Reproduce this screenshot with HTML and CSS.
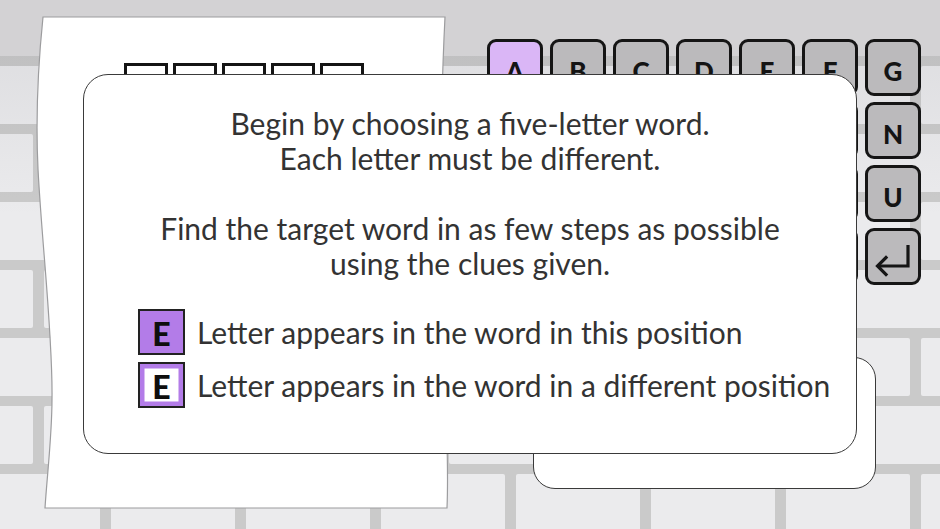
FILE: index.html
```html
<!DOCTYPE html>
<html>
<head>
<meta charset="utf-8">
<link rel="stylesheet" href="styles.css">
</head>
<body>
<div class="scene">
  <div class="bg">
    <div class="band"></div>
    <div class="row row-b"><i></i><i></i><i></i><i></i><i></i><i></i><i></i><i></i></div>
    <div class="row row-a"><i></i><i></i><i></i><i></i><i></i><i></i><i></i><i></i></div>
    <div class="row row-b"><i></i><i></i><i></i><i></i><i></i><i></i><i></i><i></i></div>
    <div class="row row-a"><i></i><i></i><i></i><i></i><i></i><i></i><i></i><i></i></div>
    <div class="row row-b"><i></i><i></i><i></i><i></i><i></i><i></i><i></i><i></i></div>
    <div class="row row-a"><i></i><i></i><i></i><i></i><i></i><i></i><i></i><i></i></div>
    <div class="row row-b"><i></i><i></i><i></i><i></i><i></i><i></i><i></i><i></i></div>
  </div>
  <div class="shade"></div>

  <div class="paper">
    <svg class="paper-shape" width="420" height="500" viewBox="0 0 420 500">
      <path d="M7,1 L409,1 C406,60 404,150 405,250 C406,350 414,420 411,492 L9,492 C11,460 16,420 16,383 C17,320 6,230 2,153 C-1,90 3,40 7,1 Z" fill="#ffffff" stroke="#9c9c9e" stroke-width="1.2"/>
    </svg>
    <div class="slots">
      <div class="slot"></div><div class="slot"></div><div class="slot"></div><div class="slot"></div><div class="slot"></div>
    </div>
  </div>

  <div class="keys">
    <div class="key sel">A</div><div class="key">B</div><div class="key">C</div><div class="key">D</div><div class="key">E</div><div class="key">F</div><div class="key">G</div>
    <div class="key">H</div><div class="key">I</div><div class="key">J</div><div class="key">K</div><div class="key">L</div><div class="key">M</div><div class="key">N</div>
    <div class="key">O</div><div class="key">P</div><div class="key">Q</div><div class="key">R</div><div class="key">S</div><div class="key">T</div><div class="key">U</div>
    <div class="key">V</div><div class="key">W</div><div class="key">X</div><div class="key">Y</div><div class="key">Z</div><div class="key">⌫</div>
    <div class="key enter">
      <svg width="56" height="57" viewBox="0 0 56 57"><path d="M43,17 L43,38 L13,38" fill="none" stroke="#151515" stroke-width="3.2" stroke-linejoin="miter"/><path d="M21,29.5 L12.5,38 L21,46.5" fill="none" stroke="#151515" stroke-width="3.2" stroke-linecap="square"/></svg>
    </div>
  </div>

  <div class="card-back"></div>

  <div class="modal">
    <p class="para">Begin by choosing a five-letter word.<br>Each letter must be different.</p>
    <p class="para second">Find the target word in as few steps as possible<br>using the clues given.</p>
    <div class="legend">
      <div class="legend-row"><span class="tile filled">E</span><span>Letter appears in the word in this position</span></div>
      <div class="legend-row"><span class="tile outlined">E</span><span>Letter appears in the word in a different position</span></div>
    </div>
  </div>
</div>
</body>
</html>
```

FILE: styles.css
```css
html, body {
  margin: 0;
  padding: 0;
}
body {
  width: 940px;
  height: 529px;
  overflow: hidden;
  font-family: "Lato", "Liberation Sans", sans-serif;
}
.scene {
  position: relative;
  width: 940px;
  height: 529px;
  overflow: hidden;
  background: #cacaca;
}
.bg {
  display: flex;
  flex-direction: column;
  gap: 10px;
}
.band {
  height: 56px;
  background: #d3d2d4;
}
.row {
  display: flex;
  gap: 11px;
  height: 58px;
  flex: none;
}
.row i {
  flex: none;
  width: 124px;
  height: 58px;
  background: #ebebed;
  border-radius: 2px;
}
.row-b { margin-left: -24px; }
.row-a { margin-left: -91px; }
.shade {
  position: absolute;
  left: 0; top: 56px;
  width: 940px;
  height: 160px;
  background: linear-gradient(to bottom, rgba(80,80,90,0.08), rgba(80,80,90,0));
}

.paper {
  position: absolute;
  left: 36px;
  top: 16px;
  width: 420px;
  height: 500px;
}
.paper-shape {
  position: absolute;
  left: 0; top: 0;
}
.slots {
  position: relative;
  display: flex;
  gap: 5px;
  padding: 47px 0 0 88px;
}
.slot {
  width: 38px;
  height: 40px;
  border: 3px solid #141414;
  background: #fff;
}

.keys {
  position: absolute;
  left: 487px;
  top: 39px;
  display: grid;
  grid-template-columns: repeat(7, 56px);
  grid-auto-rows: 57px;
  column-gap: 7px;
  row-gap: 6px;
}
.key {
  box-sizing: border-box;
  border: 3px solid #151515;
  border-radius: 9px;
  background: #bbbabc;
  display: flex;
  align-items: center;
  justify-content: center;
  padding-top: 6px;
  font-weight: 900;
  font-size: 26px;
  color: #141414;
}
.key.sel { background: #dab6f6; }
.key.enter { padding: 0; position: relative; }
.key.enter svg { position: absolute; left: -3px; top: -3px; }

.card-back {
  position: absolute;
  left: 533px;
  top: 357px;
  width: 341px;
  height: 130px;
  background: #fff;
  border: 1.5px solid #3a3a3a;
  border-radius: 22px;
}

.modal {
  position: absolute;
  left: 83px;
  top: 74px;
  width: 772px;
  height: 378px;
  background: #fff;
  border: 1.5px solid #3a3a3a;
  border-radius: 25px;
  color: #333333;
  font-size: 30px;
  line-height: 35px;
}
.para {
  margin: 0;
  text-align: center;
  padding-top: 31px;
}
.para.second {
  padding-top: 35px;
}
.legend {
  display: flex;
  flex-direction: column;
  gap: 7px;
  padding: 28px 0 0 54px;
}
.legend-row {
  display: flex;
  align-items: center;
  gap: 12px;
  height: 46px;
}
.tile {
  box-sizing: border-box;
  width: 47px;
  height: 46px;
  display: flex;
  align-items: center;
  justify-content: center;
  font-weight: 900;
  font-size: 32px;
  color: #0e0e0e;
  padding-top: 3px;
}
.tile.filled {
  background: #b37ce8;
  border: 2.5px solid #222;
}
.tile.outlined {
  background: #fff;
  border: 2.5px solid #222;
  box-shadow: inset 0 0 0 4.5px #b37ce8;
}
```
